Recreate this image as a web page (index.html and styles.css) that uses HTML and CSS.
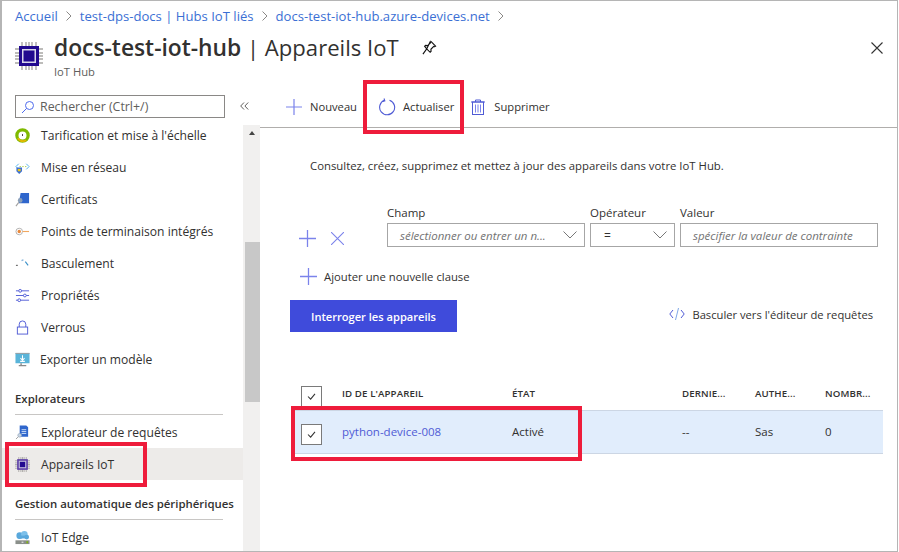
FILE: index.html
```html
<!DOCTYPE html>
<html lang="fr">
<head>
    <meta charset="UTF-8">
    <meta name="viewport" content="width=device-width, initial-scale=1.0">
    <title>docs-test-iot-hub | Appareils IoT</title>
    <link rel="stylesheet" href="styles.css">
</head>
<body>
<div class="frame">
    <div class="crumbs">
        <a>Accueil</a><svg class="sep" viewBox="0 0 6 10"><path d="M.5.500L5 5 .5 9.500" fill="none" stroke="#8a8886"/></svg>
        <a>test-dps-docs | Hubs IoT liés</a><svg class="sep" viewBox="0 0 6 10"><path d="M.5.500L5 5 .5 9.500" fill="none" stroke="#8a8886"/></svg>
        <a>docs-test-iot-hub.azure-devices.net</a><svg class="sep" viewBox="0 0 6 10"><path d="M.5.500L5 5 .5 9.500" fill="none" stroke="#8a8886"/></svg>
    </div>

    <div class="head">
        <svg class="head-icon" viewBox="0 0 28 28">
            <path d="M7 0v28M11 0v28M14 0v28M17 0v28M21 0v28M0 7h28M0 11h28M0 14h28M0 17h28M0 21h28" stroke="#a8a6a4" stroke-width="1.400"/>
            <rect x="4" y="4" width="20" height="20" fill="#21098f"/>
            <rect x="7" y="7" width="14" height="14" fill="#d8d6ea"/>
            <rect x="8.500" y="8.500" width="11" height="11" fill="#21098f"/>
        </svg>
        <div class="head-text">
            <div class="title-row">
                <h1><b>docs-test-iot-hub</b> | Appareils IoT</h1>
                <svg class="pin" viewBox="0 0 16 16"><path d="M9.500 1.500l5 5-1 .7-1-.3-3 3 .2 2.200-1 1L5 9.500 1 15M5 9.500L2.800 6.800l1-1 2.200.2 3-3-.3-1z" fill="none" stroke="#111" stroke-width="1.200"/></svg>
            </div>
            <div class="subtitle">IoT Hub</div>
        </div>
        <svg class="close" viewBox="0 0 12 12"><path d="M.5.500l11 11M11.500.500l-11 11" stroke="#333" stroke-width="1.100"/></svg>
    </div>

    <div class="body">
        <aside class="side">
            <div class="side-main">
                <div class="search-row">
                    <div class="search">
                        <svg class="search-icon" viewBox="0 0 14 14"><circle cx="8.500" cy="5.500" r="4" fill="none" stroke="#4f6bed"/><path d="M5.500 8.500L1 13" stroke="#4f6bed"/></svg>
                        Rechercher (Ctrl+/)
                    </div>
                </div>
                <ul class="nav">
                    <li><svg viewBox="0 0 16 16"><circle cx="8" cy="8" r="6" fill="none" stroke="#7fba00" stroke-width="3.500"/><circle cx="8" cy="8" r="2.500" fill="#fff"/><path d="M8 6.500v2" stroke="#333"/><path d="M3 11a6.500 6.500 0 0 0 9 2" fill="none" stroke="#e5b800" stroke-width="2"/></svg>Tarification et mise à l'échelle</li>
                    <li><svg viewBox="0 0 16 16"><path d="M4 4L1 7l3 3M12 4l3 3-3 3" fill="none" stroke="#50b0e8"/><path d="M5 7h1M8 7h1M11 7h1" stroke="#7fba00"/><path d="M1.500 8h6v4l-3 3-3-3z" fill="#3b6fd4"/><rect x="3" y="9.500" width="3" height="2.500" fill="#f2c811"/></svg>Mise en réseau</li>
                    <li><svg viewBox="0 0 16 16"><path d="M6 1h9v11H4z" fill="#2f66cc"/><circle cx="5.500" cy="9" r="2.500" fill="#8a9fb8"/><path d="M4 11l-3 4" stroke="#a0a0a0" stroke-width="1.200"/></svg>Certificats</li>
                    <li><svg viewBox="0 0 16 16"><circle cx="4.500" cy="8" r="3.500" fill="#fff" stroke="#b0b0b0"/><circle cx="4.500" cy="8" r="1.800" fill="#e8873a"/><path d="M8 8h7" stroke="#f0a860" stroke-width="1.200"/></svg>Points de terminaison intégrés</li>
                    <li><svg viewBox="0 0 16 16"><path d="M1 10h2" stroke="#666" stroke-width="1.200"/><path d="M7 5l2-1" stroke="#7fb0d8" stroke-width="1.400"/><path d="M11 6l3 4" stroke="#3a90c8" stroke-width="1.200"/></svg>Basculement</li>
                    <li><svg viewBox="0 0 16 16"><path d="M1 3h3M7 3h8M1 8h8M12 8h3M1 13h2M6 13h9" stroke="#4f5bd5"/><circle cx="5.500" cy="3" r="1.500" fill="none" stroke="#4f5bd5"/><circle cx="10.500" cy="8" r="1.500" fill="none" stroke="#4f5bd5"/><circle cx="4.500" cy="13" r="1.500" fill="none" stroke="#4f5bd5"/></svg>Propriétés</li>
                    <li><svg viewBox="0 0 16 16"><rect x="2.500" y="7.500" width="11" height="7.500" fill="#fff" stroke="#4f5bd5"/><path d="M4.500 7.500V4.500a3.500 3.500 0 0 1 7 0v3" fill="none" stroke="#4f5bd5"/></svg>Verrous</li>
                    <li class="nudge"><svg viewBox="0 0 16 16"><rect x="0.500" y="1" width="15" height="11" fill="#59b4d9"/><rect x="0.500" y="1" width="15" height="1" fill="#a0a0a0"/><path d="M8 3.500v5M5.800 6.500L8 8.800l2.200-2.300M5.500 10h5" fill="none" stroke="#fff" stroke-width="1.100"/><path d="M4 14.500h8M6.500 12v2" stroke="#8a8a8a" stroke-width="1.500"/></svg>Exporter un modèle</li>
                </ul>
                <h3 class="nav-head">Explorateurs</h3>
                <ul class="nav">
                    <li><svg viewBox="0 0 16 16"><path d="M5 .5h7l2 2v10H5z" fill="#2f66cc"/><path d="M7 5h5M7 7h5M7 9h5" stroke="#cfe0f7"/><circle cx="5" cy="11" r="2" fill="#c8d4e0" stroke="#8a9fb8" stroke-width=".6"/><path d="M3.500 12.500L1 15" stroke="#a0a0a0"/></svg>Explorateur de requêtes</li>
                    <li class="active"><svg viewBox="0 0 28 28"><path d="M7 0v28M11 0v28M14 0v28M17 0v28M21 0v28M0 7h28M0 11h28M0 14h28M0 17h28M0 21h28" stroke="#a8a6a4" stroke-width="1.600"/><rect x="4" y="4" width="20" height="20" fill="#5c3fa8"/><rect x="7" y="7" width="14" height="14" fill="#c4c0dc"/><rect x="9" y="9" width="10" height="10" fill="#21098f"/></svg>Appareils IoT</li>
                </ul>
                <h3 class="nav-head">Gestion automatique des périphériques</h3>
                <ul class="nav">
                    <li><svg viewBox="0 0 16 16"><circle cx="5" cy="6" r="3.500" fill="#59a8dc"/><circle cx="10" cy="4.500" r="3.500" fill="#7cc0ea"/><circle cx="12.500" cy="7.500" r="2.500" fill="#59a8dc"/><rect x="3" y="6" width="10" height="3" fill="#59a8dc"/><rect x="0.500" y="11" width="15" height="4" fill="#8a8f8a"/><path d="M7 13h2" stroke="#fff"/><path d="M13 12v2" stroke="#7fba00" stroke-width="1.500"/></svg>IoT Edge</li>
                </ul>
            </div>
            <div class="side-rail">
                <div class="collapse"><svg viewBox="0 0 9 8"><path d="M4 .5L.7 4 4 7.500M8.200.5L4.900 4l3.300 3.500" fill="none" stroke="#605e5c"/></svg></div>
                <div class="scrollbar">
                    <span class="scroll-up"></span>
                    <div class="thumb"></div>
                </div>
            </div>
        </aside>

        <main class="main">
            <div class="toolbar">
                <div class="tool tool-new">
                    <svg class="plus" viewBox="0 0 16 16"><path d="M8 0v16M0 8h16" stroke="#7b83eb" stroke-width="1.200"/></svg>
                    Nouveau
                </div>
                <div class="tool tool-refresh">
                    <svg class="refresh" viewBox="0 0 18 18"><path d="M6.500 2.300a7.500 7.500 0 1 0 5-.1" fill="none" stroke="#4f5bd5" stroke-width="1.100"/><path d="M6 .5l.8 2.300-2.300.8" fill="none" stroke="#4f5bd5" stroke-width="1.100"/></svg>
                    Actualiser
                </div>
                <div class="tool tool-delete">
                    <svg class="trash" viewBox="0 0 14 16"><path d="M0 3h14M4.500 3V1h5v2" fill="none" stroke="#4f5bd5"/><rect x="1.500" y="3" width="11" height="12.500" fill="none" stroke="#4f5bd5"/><path d="M4.500 5.500v8M7 5.500v8M9.500 5.500v8" stroke="#7b83eb"/></svg>
                    Supprimer
                </div>
            </div>

            <p class="intro">Consultez, créez, supprimez et mettez à jour des appareils dans votre IoT Hub.</p>

            <div class="clause">
                <div class="clause-icons">
                    <svg class="plus-sm" viewBox="0 0 16 16"><path d="M8 0v16M0 8h16" stroke="#7b83eb" stroke-width="1.200"/></svg>
                    <svg class="cross" viewBox="0 0 12 12"><path d="M0 0l12 12M12 0L0 12" stroke="#7b83eb" stroke-width="1"/></svg>
                </div>
                <div class="field field-name">
                    <label>Champ</label>
                    <div class="input"><i>sélectionner ou entrer un n...</i><svg class="chev" viewBox="0 0 14 8"><path d="M.5.500L7 7l6.500-6.500" fill="none" stroke="#777"/></svg></div>
                </div>
                <div class="field field-op">
                    <label>Opérateur</label>
                    <div class="input"><span class="eq">=</span><svg class="chev" viewBox="0 0 14 8"><path d="M.5.500L7 7l6.500-6.500" fill="none" stroke="#777"/></svg></div>
                </div>
                <div class="field field-value">
                    <label>Valeur</label>
                    <div class="input"><i>spécifier la valeur de contrainte</i></div>
                </div>
            </div>

            <div class="add-clause">
                <svg class="plus-sm" viewBox="0 0 16 16"><path d="M8 0v16M0 8h16" stroke="#7b83eb" stroke-width="1.200"/></svg>
                Ajouter une nouvelle clause
            </div>

            <div class="actions">
                <button class="query-btn">Interroger les appareils</button>
                <div class="switch">
                    <svg class="code" viewBox="0 0 16 14"><path d="M4 3L.8 7 4 11M12 3l3.200 4L12 11" fill="none" stroke="#4f5bd5"/><path d="M9.500 1L6.500 13" stroke="#7fa8e8"/></svg>
                    Basculer vers l'éditeur de requêtes
                </div>
            </div>

            <div class="table">
                <div class="row row-head">
                    <span class="check"><svg viewBox="0 0 10 8"><path d="M1 4l3 3 5-6" fill="none" stroke="#333" stroke-width="1.200"/></svg></span>
                    <span>ID DE L'APPAREIL</span>
                    <span>ÉTAT</span>
                    <span>DERNIE...</span>
                    <span>AUTHE...</span>
                    <span>NOMBR...</span>
                </div>
                <div class="row row-item">
                    <span class="check"><svg viewBox="0 0 10 8"><path d="M1 4l3 3 5-6" fill="none" stroke="#333" stroke-width="1.200"/></svg></span>
                    <a>python-device-008</a>
                    <span>Activé</span>
                    <span>--</span>
                    <span>Sas</span>
                    <span>0</span>
                </div>
            </div>
        </main>
    </div>

    <!-- cadres rouges poses sur la capture -->
    <div class="mark mark-refresh"></div>
    <div class="mark mark-row"></div>
    <div class="mark mark-nav"></div>
</div>
</body>
</html>
```

FILE: styles.css
```css
* {
    box-sizing: border-box;
}

html, body {
    margin: 0;
    height: 552px;
    overflow: hidden;
    background: #fff;
}

body {
    font-family: "Open Sans", "Liberation Sans", sans-serif;
    font-size: 12px;
    color: #323130;
}

.frame {
    position: relative;
    width: 898px;
    height: 552px;
    border: 1px solid #b5b5b5;
    border-left-width: 2px;
    overflow: hidden;
    display: flex;
    flex-direction: column;
}

/* fil d'ariane */
.crumbs {
    height: 29px;
    padding-left: 13px;
    display: flex;
    align-items: center;
    font-size: 13.100px;
    color: #3b6fd4;
    white-space: nowrap;
}

.sep {
    width: 6px;
    height: 10px;
    margin: 1px 8px 0;
    flex: none;
}

/* en-tete */
.head {
    height: 60px;
    padding-left: 13px;
    display: flex;
    position: relative;
}

.head-icon {
    width: 28px;
    height: 28px;
    margin-top: 12px;
    flex: none;
}

.head-text {
    margin-left: 11px;
}

.title-row {
    display: flex;
    align-items: center;
    height: 34px;
}

h1 {
    margin: 0;
    font-size: 22.100px;
    font-weight: 400;
    line-height: 34px;
    color: #323130;
    white-space: nowrap;
}

h1 b {
    font-size: 22.800px;
    font-weight: 600;
}

.pin {
    width: 15px;
    height: 15px;
    margin-left: 23px;
}

.subtitle {
    font-size: 11.200px;
    color: #605e5c;
}

.close {
    position: absolute;
    right: 14px;
    top: 12px;
    width: 12px;
    height: 12px;
}

.body {
    flex: 1;
    display: flex;
    min-height: 0;
}

/* menu lateral */
.side {
    width: 258px;
    flex: none;
    display: flex;
}

.side-main {
    width: 241px;
    padding-left: 13px;
    flex: none;
    overflow: hidden;
}

.search-row {
    height: 29px;
    padding-top: 5px;
}

.search {
    width: 210px;
    height: 23px;
    border: 1px solid #8a8886;
    display: flex;
    align-items: center;
    gap: 5px;
    padding-left: 5px;
    color: #605e5c;
    font-size: 12.400px;
}

.search-icon {
    width: 14px;
    height: 14px;
}

.nav {
    list-style: none;
    margin: 0;
    padding: 0;
}

.nav li {
    height: 32px;
    display: flex;
    align-items: center;
    gap: 11px;
    font-size: 12.100px;
    white-space: nowrap;
}

.nav li svg {
    width: 15px;
    height: 15px;
    flex: none;
}

.nav .nudge {
    gap: 10px;
}

.nav .active {
    background: #edebe9;
    margin-left: -13px;
    padding-left: 13px;
}

.nav-head {
    margin: 0 0 1px;
    height: 40px;
    padding-top: 15px;
    border-bottom: 1px solid #c8c6c4;
    width: 208px;
    font-size: 11.400px;
    font-weight: 600;
    line-height: 17px;
    white-space: nowrap;
}

.side-rail {
    width: 17px;
    flex: none;
    display: flex;
    flex-direction: column;
}

.collapse {
    height: 35px;
    padding-top: 12px;
}

.collapse svg {
    display: block;
    width: 9px;
    height: 8px;
    margin-left: -3px;
}

.scrollbar {
    flex: 1;
    background: #f1f0ef;
    position: relative;
}

.scroll-up {
    display: block;
    margin: 6px auto 0;
    width: 0;
    height: 0;
    border: 3.500px solid transparent;
    border-top: 0;
    border-bottom: 4px solid #444;
}

.thumb {
    position: absolute;
    top: 117px;
    left: 2px;
    width: 15px;
    height: 160px;
    background: #c8c8c8;
}

/* contenu */
.main {
    flex: 1;
    min-width: 0;
}

.toolbar {
    height: 38px;
    border-bottom: 1px solid #b0aeac;
    display: flex;
    align-items: center;
    font-size: 11.200px;
    padding-bottom: 4px;
}

.tool {
    display: flex;
    align-items: center;
    white-space: nowrap;
}

.tool-new {
    padding-left: 26px;
    gap: 8px;
}

.tool-refresh {
    padding-left: 21px;
    gap: 7px;
}

.tool-delete {
    padding-left: 17px;
    gap: 9px;
}

.plus {
    width: 16px;
    height: 16px;
}

.refresh {
    width: 18px;
    height: 18px;
}

.trash {
    width: 14px;
    height: 16px;
}

.intro {
    margin: 30px 0 0 50px;
    font-size: 11.350px;
    line-height: 16px;
    white-space: nowrap;
}

.clause {
    display: flex;
    align-items: flex-end;
    margin-top: 30px;
    padding-left: 39px;
}

.clause-icons {
    width: 88px;
    height: 23px;
    display: flex;
    align-items: center;
    gap: 15px;
    flex: none;
    position: relative;
    top: 3px;
}

.plus-sm {
    width: 17px;
    height: 17px;
    flex: none;
}

.cross {
    width: 13px;
    height: 13px;
}

.field label {
    display: block;
    height: 19px;
    line-height: 17px;
    font-size: 11.500px;
}

.input {
    height: 24px;
    border: 1px solid #a6a6a6;
    display: flex;
    align-items: center;
    justify-content: space-between;
    font-size: 11.500px;
    color: #737373;
    white-space: nowrap;
}

.field-name {
    width: 198px;
}

.field-name .input {
    padding: 0 7px 0 12px;
}

.field-op {
    width: 85px;
    margin-left: 5px;
}

.field-op .input {
    padding: 0 7px 0 13px;
}

.field-value {
    width: 198px;
    margin-left: 5px;
}

.field-value .input {
    padding-left: 12px;
}

.eq {
    color: #323130;
    font-size: 12px;
}

.chev {
    width: 14px;
    height: 8px;
    flex: none;
}

.add-clause {
    display: flex;
    align-items: center;
    gap: 7px;
    padding-left: 40px;
    margin-top: 21px;
    font-size: 11.300px;
    height: 17px;
}

.actions {
    display: flex;
    align-items: center;
    justify-content: space-between;
    margin: 15px 24px 0 30px;
}

.query-btn {
    width: 167px;
    height: 32px;
    border: 0;
    background: #3f4bdb;
    color: #fff;
    font-family: inherit;
    font-size: 11.100px;
    font-weight: 600;
}

.switch {
    display: flex;
    align-items: center;
    gap: 7px;
    margin-bottom: 4px;
    font-size: 11.200px;
    white-space: nowrap;
}

.code {
    width: 16px;
    height: 14px;
}

.table {
    margin: 45px 14px 0 35px;
}

.row {
    display: grid;
    grid-template-columns: 47px 170px 170px 73px 70px 1fr;
    align-items: center;
    white-space: nowrap;
}

.row > .check {
    margin-left: 6px;
}

.row-head {
    height: 33px;
    font-size: 9.700px;
    font-weight: 600;
    letter-spacing: .1px;
    padding-bottom: 1px;
}

.row-head .check {
    margin-top: 6px;
}

.row-item {
    height: 44px;
    background: #e1edfc;
    border-top: 1px solid #ccd6e4;
    border-bottom: 1px solid #ccd6e4;
    padding-bottom: 2px;
    font-size: 11.500px;
}

.row-item .check {
    margin-top: 6px;
}

.row-item a {
    color: #4f5bd5;
}

.check {
    width: 21px;
    height: 21px;
    border: 1px solid #7a7a7a;
    background: #fff;
    display: flex;
    align-items: center;
    justify-content: center;
}

.check svg {
    width: 9px;
    height: 7px;
}

/* annotations */
.mark {
    position: absolute;
    border: 4px solid #ee1c3b;
}

.mark-refresh {
    left: 361px;
    top: 79px;
    width: 101px;
    height: 54px;
}

.mark-row {
    left: 289px;
    top: 405px;
    width: 291px;
    height: 55px;
}

.mark-nav {
    left: 3px;
    top: 441px;
    width: 142px;
    height: 45px;
}
```
